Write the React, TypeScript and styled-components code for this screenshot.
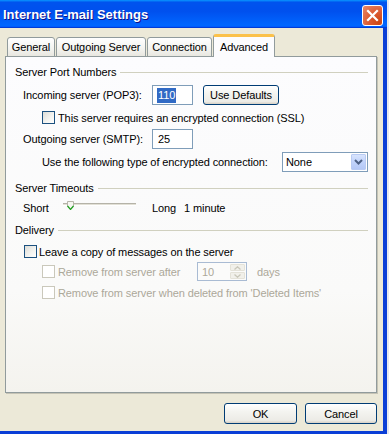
import styled, { createGlobalStyle } from "styled-components";

const GlobalStyle = createGlobalStyle`
  html, body {
    margin: 0;
    padding: 0;
    background: #e6e8ee;
  }
  body {
    font-family: "Liberation Sans", Arial, sans-serif;
    font-size: 11px;
    letter-spacing: -0.1px;
    color: #000;
  }
`;

const App = () => {
  return (
    <>
      <GlobalStyle />
      <Window>
        <TitleBar>
          <Title>Internet E-mail Settings</Title>
          <CloseButton type="button">
            <svg width="13" height="13" viewBox="0 0 13 13">
              <path d="M2 2 L11 11 M11 2 L2 11" stroke="#fff" strokeWidth="2.2" strokeLinecap="square" />
            </svg>
          </CloseButton>
        </TitleBar>

        <Body>
          <TabRow>
            <Tab $w={48}>General</Tab>
            <Tab $w={90}>Outgoing Server</Tab>
            <Tab $w={65}>Connection</Tab>
            <Tab $w={62} $active>
              Advanced
            </Tab>
          </TabRow>

          <Panel>
            <GroupHeader>Server Port Numbers</GroupHeader>

            <Row $mt={5} $h={20} $indent={8}>
              <Label $w={129}>Incoming server (POP3):</Label>
              <TextBox>
                <Selected>110</Selected>
              </TextBox>
              <PushButton type="button" $w={76} $ml={10}>
                Use Defaults
              </PushButton>
            </Row>

            <Row $mt={6} $h={13} $indent={27}>
              <CheckBox />
              <span>This server requires an encrypted connection (SSL)</span>
            </Row>

            <Row $mt={5} $h={20} $indent={8}>
              <Label $w={129}>Outgoing server (SMTP):</Label>
              <TextBox>25</TextBox>
            </Row>

            <Row $mt={3} $h={20} $indent={27}>
              <span>Use the following type of encrypted connection:</span>
              <Select>
                <SelectText>None</SelectText>
                <DropButton>
                  <svg width="9" height="6" viewBox="0 0 9 6">
                    <path d="M1 1 L4.5 4.5 L8 1" stroke="#4d6185" strokeWidth="2" fill="none" />
                  </svg>
                </DropButton>
              </Select>
            </Row>

            <GroupHeader $mt={8}>Server Timeouts</GroupHeader>

            <Row $mt={4} $h={16} $indent={8}>
              <Label $w={40}>Short</Label>
              <Slider>
                <Track />
                <Thumb>
                  <svg width="7" height="9" viewBox="0 0 7 9">
                    <path d="M0.5 0.5 H6.5 V5 L3.5 8.5 L0.5 5 Z" fill="#f6f6f1" stroke="#b7b5aa" />
                    <path d="M0.5 5 L3.5 8.5 L6.5 5" stroke="#21a121" strokeWidth="1.2" fill="none" />
                  </svg>
                </Thumb>
              </Slider>
              <Label $w={32} $ml={16}>
                Long
              </Label>
              <span>1 minute</span>
            </Row>

            <GroupHeader $mt={6}>Delivery</GroupHeader>

            <Row $mt={7} $h={13} $indent={9}>
              <CheckBox $gap={2} />
              <span>Leave a copy of messages on the server</span>
            </Row>

            <Row $mt={4} $h={19} $indent={27} $disabled>
              <CheckBox $disabled />
              <Label $w={139}>Remove from server after</Label>
              <SpinBox>
                <SpinText>10</SpinText>
                <SpinButtons>
                  <SpinArrow>
                    <svg width="7" height="4" viewBox="0 0 7 4">
                      <path d="M0.5 3.5 L3.5 0.8 L6.5 3.5" stroke="#c9c7ba" strokeWidth="1.3" fill="none" />
                    </svg>
                  </SpinArrow>
                  <SpinArrow>
                    <svg width="7" height="4" viewBox="0 0 7 4">
                      <path d="M0.5 0.5 L3.5 3.2 L6.5 0.5" stroke="#c9c7ba" strokeWidth="1.3" fill="none" />
                    </svg>
                  </SpinArrow>
                </SpinButtons>
              </SpinBox>
              <Label $ml={10}>days</Label>
            </Row>

            <Row $mt={5} $h={13} $indent={27} $disabled>
              <CheckBox $disabled />
              <span>Remove from server when deleted from 'Deleted Items'</span>
            </Row>
          </Panel>

          <Footer>
            <PushButton type="button" $w={73}>
              OK
            </PushButton>
            <PushButton type="button" $w={72}>
              Cancel
            </PushButton>
          </Footer>
        </Body>
      </Window>
    </>
  );
};

const Window = styled.div`
  width: 387px;
  height: 434px;
  display: flex;
  flex-direction: column;
`;

const TitleBar = styled.div`
  height: 28px;
  flex: none;
  display: flex;
  align-items: center;
  justify-content: space-between;
  padding: 0 4px 0 3px;
  box-sizing: border-box;
  background: linear-gradient(
    to bottom,
    #0997ff 0%,
    #0053ee 8%,
    #0050ee 40%,
    #0066ff 88%,
    #0066ff 93%,
    #005bff 95%,
    #003dd7 96%,
    #003dd7 100%
  );
`;

const Title = styled.div`
  color: #fff;
  font-weight: 700;
  font-size: 13px;
  letter-spacing: 0;
  text-shadow: 1px 1px 0 #0f1089;
  padding-top: 1px;
`;

const CloseButton = styled.button`
  width: 21px;
  height: 21px;
  padding: 0;
  margin-top: 2px;
  display: flex;
  align-items: center;
  justify-content: center;
  border: 1px solid #fff;
  border-radius: 3px;
  background: radial-gradient(circle at 85% 85%, #cc4614 0%, #dc5a32 45%, #e98a6a 100%);
`;

const Body = styled.div`
  flex: 1;
  display: flex;
  flex-direction: column;
  background: #ece9d8;
  border-right: 4px solid #0a3ed6;
  border-bottom: 3px solid #0a3ed6;
  padding: 6px 6px 7px 5px;
`;

const TabRow = styled.div`
  height: 23px;
  flex: none;
  display: flex;
  align-items: flex-end;
  gap: 1px;
  padding-left: 2px;
  margin-bottom: -1px;
`;

const Tab = styled.div<{ $w: number; $active?: boolean }>`
  width: ${(p) => p.$w}px;
  height: ${(p) => (p.$active ? 23 : 20)}px;
  box-sizing: border-box;
  display: flex;
  align-items: center;
  justify-content: center;
  padding-bottom: ${(p) => (p.$active ? 1 : 0)}px;
  border: 1px solid #919b9c;
  border-bottom: ${(p) => (p.$active ? "none" : "1px solid #919b9c")};
  border-top: ${(p) => (p.$active ? "3px solid #fbc14a" : "1px solid #919b9c")};
  border-radius: 3px 3px 0 0;
  background: ${(p) =>
    p.$active ? "#fcfcfe" : "linear-gradient(to bottom, #ffffff 0%, #f3f3ef 60%, #e8e7e0 100%)"};
  position: ${(p) => (p.$active ? "relative" : "static")};
  z-index: ${(p) => (p.$active ? 1 : 0)};
`;

const Panel = styled.div`
  flex: 1;
  display: flex;
  flex-direction: column;
  border: 1px solid #919b9c;
  background: linear-gradient(to bottom, #fcfcfe 0%, #fafaf9 70%, #f4f3ee 100%);
  box-shadow: 1px 1px 0 #c5c3b5;
  padding: 7px 8px 0 9px;
`;

const GroupHeader = styled.div<{ $mt?: number }>`
  height: 16px;
  margin-top: ${(p) => p.$mt ?? 0}px;
  display: flex;
  align-items: center;
  gap: 4px;
  white-space: nowrap;

  &::after {
    content: "";
    flex: 1;
    height: 1px;
    background: #d0d0bf;
  }
`;

const Row = styled.div<{ $mt: number; $h: number; $indent: number; $disabled?: boolean }>`
  height: ${(p) => p.$h}px;
  margin-top: ${(p) => p.$mt}px;
  padding-left: ${(p) => p.$indent}px;
  display: flex;
  align-items: center;
  white-space: nowrap;
  color: ${(p) => (p.$disabled ? "#aca899" : "#000")};
`;

const Label = styled.span<{ $w?: number; $ml?: number }>`
  width: ${(p) => (p.$w ? `${p.$w}px` : "auto")};
  margin-left: ${(p) => p.$ml ?? 0}px;
  flex: none;
`;

const TextBox = styled.div`
  width: 41px;
  height: 20px;
  box-sizing: border-box;
  border: 1px solid #7f9db9;
  background: #fff;
  padding-left: 5px;
  display: flex;
  align-items: center;
`;

const Selected = styled.span`
  background: #316ac5;
  color: #fff;
  line-height: 15px;
  padding: 0 1px;
  margin-left: -1px;
`;

const PushButton = styled.button<{ $w: number; $ml?: number }>`
  width: ${(p) => p.$w}px;
  height: ${(p) => (p.$ml ? 20 : 21)}px;
  margin-left: ${(p) => p.$ml ?? 0}px;
  padding: 0;
  box-sizing: border-box;
  font-family: "Liberation Sans", Arial, sans-serif;
  font-size: 11px;
  letter-spacing: -0.1px;
  color: #000;
  border: 1px solid #003c74;
  border-radius: 3px;
  background: linear-gradient(to bottom, #ffffff 0%, #f4f4f0 40%, #ecebe6 86%, #d6d0c5 100%);
`;

const CheckBox = styled.span<{ $disabled?: boolean; $gap?: number }>`
  width: 13px;
  height: 13px;
  flex: none;
  box-sizing: border-box;
  margin-right: ${(p) => p.$gap ?? 3}px;
  border: 1px solid ${(p) => (p.$disabled ? "#cac8bb" : "#1c5180")};
  background: ${(p) =>
    p.$disabled ? "#fff" : "linear-gradient(135deg, #dcdcd7 0%, #f4f4f1 60%, #ffffff 100%)"};
`;

const Select = styled.div`
  width: 86px;
  height: 20px;
  margin-left: auto;
  box-sizing: border-box;
  border: 1px solid #7f9db9;
  background: #fff;
  display: flex;
  align-items: center;
  padding-right: 1px;
`;

const SelectText = styled.span`
  flex: 1;
  padding-left: 3px;
`;

const DropButton = styled.span`
  width: 15px;
  height: 16px;
  box-sizing: border-box;
  border: 1px solid #b9cbf3;
  border-radius: 1px;
  background: linear-gradient(to bottom, #d8e4fd 0%, #c1d3fb 50%, #b4c8f6 100%);
  display: flex;
  align-items: center;
  justify-content: center;
`;

const Slider = styled.div`
  width: 73px;
  height: 16px;
  position: relative;
  display: flex;
  align-items: flex-start;
`;

const Track = styled.div`
  width: 100%;
  height: 3px;
  margin-top: 3px;
  box-sizing: border-box;
  border-top: 1px solid #b5b3a8;
  border-bottom: 1px solid #ffffff;
  background: #e2e0d6;
`;

const Thumb = styled.div`
  position: absolute;
  left: 4px;
  top: 1px;
  display: flex;
`;

const SpinBox = styled.div`
  width: 50px;
  height: 19px;
  box-sizing: border-box;
  border: 1px solid #a9bbd3;
  background: #fbfbfa;
  display: flex;
  align-items: stretch;
  padding: 1px;
`;

const SpinText = styled.span`
  flex: 1;
  display: flex;
  align-items: center;
  padding-left: 3px;
`;

const SpinButtons = styled.div`
  width: 15px;
  display: flex;
  flex-direction: column;
  gap: 1px;
`;

const SpinArrow = styled.span`
  flex: 1;
  display: flex;
  align-items: center;
  justify-content: center;
  border: 1px solid #e4e2d8;
  border-radius: 1px;
  background: #f1f0ea;
`;

const Footer = styled.div`
  flex: none;
  display: flex;
  justify-content: flex-end;
  gap: 8px;
  margin-top: 10px;
`;

export default App;
